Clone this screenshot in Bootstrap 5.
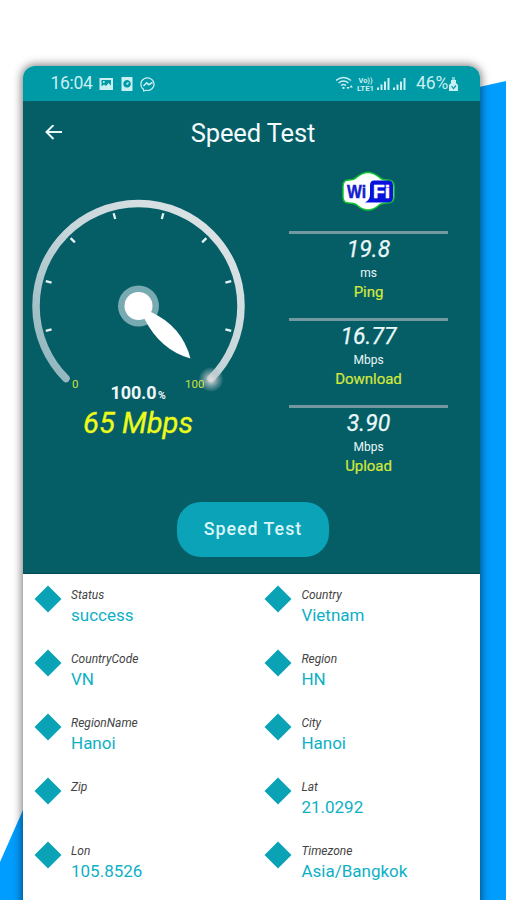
<!DOCTYPE html>
<html lang="en">
<head>
<meta charset="utf-8">
<meta name="viewport" content="width=device-width, initial-scale=1">
<title>Speed Test</title>
<link href="https://cdn.jsdelivr.net/npm/bootstrap@5.3.0/dist/css/bootstrap.min.css" rel="stylesheet">
<style>
body{font-family:Roboto,"Liberation Sans",sans-serif;background:#fff;width:506px;height:900px;line-height:1}
.stage{height:900px;padding:66px 26px 0 23px;isolation:isolate}
.backdrop{inset:0;z-index:-1}
.phone{height:860px;border-radius:12px 12px 0 0;box-shadow:0 0 10px 1px rgba(0,0,0,.55)}
.status{height:35px;background:#0099a6;color:#c8eff1;padding:0 21px 0 27.5px;font-size:17.5px}
.status-time{letter-spacing:-.3px;width:48px}
.status-power{letter-spacing:-.2px}
.panel{height:473px;background:#055e66;border-bottom:1px solid #004b53}
.title-bar{height:64px;color:#f3fbfc}
.title-bar .back{width:62px;padding-left:22px}
.title-bar h1{font-size:25.5px;font-weight:400;width:336px;letter-spacing:-.1px}
.gauge-box{width:232px}
.gauge-box svg{display:block}
.stats{width:159px;margin-left:34px;color:#e9f7f8}
.logo-box{height:66px}
.stat{height:87px;border-top:3px solid #7398a0}
.stat-value{font-size:23px;font-style:italic;line-height:28px;margin-top:2px;-webkit-text-stroke:.25px}
.stat-unit{font-size:12px;line-height:18px}
.stat-name{font-size:15px;line-height:20px;color:#d5e83c;letter-spacing:-.05px;-webkit-text-stroke:.2px}
.go{width:152px;height:55px;background:#0aa3b8!important;color:#daf6f8!important;border:0;border-radius:24px;font-size:17.8px;letter-spacing:1px;font-weight:500;margin:2px 0 0 3px}
.details{padding:9px 0 0 11px;background:#fff}
.info{height:64px;width:215px}
.info:nth-child(odd){width:230.4px}
.diamond{width:28px;height:28px;margin-top:2px;fill:#0aa3b5}
.info dl{padding-left:9px;margin:0}
.info dt{font-size:12px;font-weight:400;font-style:italic;color:#444;line-height:15px;margin-top:5px}
.info dd{font-size:17px;color:#0eb0c5;line-height:20px;margin:2px 0 0}
</style>
</head>
<body>
<div class="stage position-relative overflow-hidden">
  <svg class="backdrop position-absolute" width="506" height="900"><path d="M470 89L506 81V900H470ZM0 862L30 794V900H0Z" fill="#009dff"/></svg>
  <main class="phone bg-white overflow-hidden">
    <div class="status d-flex align-items-center justify-content-between">
      <div class="d-flex align-items-center">
        <span class="status-time">16:04</span>
        <svg width="60" height="18" viewBox="0 0 60 18">
          <path fill="#c8eff1" fill-rule="evenodd" d="M.5 3h13.500v12H.5zM2.500 5v6.500l2.500-2 2 1.500 2.500-3 2.500 2.500V5z"/><circle cx="4.800" cy="7" r="1" fill="#c8eff1"/>
          <path fill="#c8eff1" fill-rule="evenodd" d="M22.500 2h11v14h-11zM28 5a3.800 3.800 0 1 0 .1 0z"/><path d="M27.500 9.500l2-2" stroke="#c8eff1" stroke-width="1.500"/>
          <g fill="none" stroke="#c8eff1" stroke-width="1.200"><path d="M44.500 14.200a6.600 6.300 0 1 1 2.500 1.100l-2.300.7z"/><path d="M44.500 11l3.200-3.200 2 2 3.800-2.300" stroke-width="1.600"/></g>
        </svg>
      </div>
      <div class="d-flex align-items-center">
        <svg width="72" height="20" viewBox="0 0 72 20">
          <g fill="none" stroke="#c8eff1" stroke-width="1.400"><path d="M0 6.500q7.500-6 15 0M2.500 9q5-4 10 0M5 11.500q2.500-2 5 0"/></g>
          <path fill="#c8eff1" d="M6.500 13h2v2h-2zM10.500 13h3L12 15.500zM13.500 13.500L15.200 11l1.700 2.500z"/>
          <text x="22.500" y="9" font-size="8" font-weight="700" textLength="14" lengthAdjust="spacingAndGlyphs" fill="#c8eff1">Vo))</text>
          <text x="21" y="16.500" font-size="8" font-weight="700" textLength="17" lengthAdjust="spacingAndGlyphs" fill="#c8eff1">LTE1</text>
          <path fill="#c8eff1" d="M41 13.500h2V16h-2zM44.500 10.500h2V16h-2zM48 7.500h2V16h-2zM51.500 4h2v12h-2zM57 13.500h2V16h-2zM60.500 10.500h2V16h-2zM64 7.500h2V16h-2zM67.500 4h2v12h-2z"/>
        </svg>
        <span class="status-power ps-2">46%</span>
        <svg width="11" height="18" viewBox="0 0 11 18"><path d="M4 2h3v3H4z" fill="#c8eff1" opacity=".6"/><path d="M3 5h5v3l2 2v6H1v-6l2-2z" fill="#c8eff1"/><path d="M3.500 11l2 2.500 2.500-3" fill="none" stroke="#0099a6" stroke-width="1.200"/></svg>
      </div>
    </div>
    <section class="panel">
      <header class="title-bar d-flex align-items-center">
        <span class="back"><svg width="17" height="16" viewBox="0 0 17 16" fill="none" stroke="#e9f7f8" stroke-width="2"><path d="M17 7H2M8.500 0L1.500 7l7 7"/></svg></span>
        <h1 class="mb-0 text-center">Speed Test</h1>
      </header>
      <div class="d-flex">
        <div class="gauge-box">
          <svg width="232" height="280" viewBox="23 165 232 280">
            <defs>
              <linearGradient id="arc" x1="0" y1="1" x2="1" y2="0"><stop offset="0" stop-color="#8db3bc"/><stop offset=".5" stop-color="#c6d6da"/><stop offset="1" stop-color="#e3e6e8"/></linearGradient>
              <radialGradient id="glow"><stop offset="0" stop-color="#e0dddd"/><stop offset=".35" stop-color="#ccd0d2" stop-opacity=".75"/><stop offset="1" stop-color="#9bb6ba" stop-opacity=".1"/></radialGradient>
            </defs>
            <path d="M66 378.500A102.500 102.500 0 1 1 211 378.500" fill="none" stroke="url(#arc)" stroke-width="7.500" stroke-linecap="round"/>
            <circle cx="211" cy="379.500" r="12" fill="url(#glow)"/>
            <g stroke="#e7f3f4" stroke-width="2.300">
              <path d="M138.500 210v6" transform="rotate(-105 138.500 306)"/><path d="M138.500 210v6" transform="rotate(-75 138.500 306)"/><path d="M138.500 210v6" transform="rotate(-45 138.500 306)"/><path d="M138.500 210v6" transform="rotate(-15 138.500 306)"/><path d="M138.500 210v6" transform="rotate(15 138.500 306)"/><path d="M138.500 210v6" transform="rotate(45 138.500 306)"/><path d="M138.500 210v6" transform="rotate(75 138.500 306)"/><path d="M138.500 210v6" transform="rotate(105 138.500 306)"/>
            </g>
            <circle cx="138.500" cy="306" r="20.500" fill="#78aab1"/>
            <circle cx="138.500" cy="306" r="14" fill="#fff"/>
            <path d="M144 318Q160 350 190.500 358.500Q182 326 150 311.500Z" fill="#fff"/>
            <g fill="#cfe03c" font-size="11.500"><text x="72" y="387.500">0</text><text x="185" y="387.500">100</text></g>
            <text x="110.500" y="399" font-size="18" font-weight="700" fill="#edf7f8" textLength="46">100.0</text>
            <text x="158" y="399" font-size="10.500" font-weight="700" fill="#edf7f8">%</text>
            <text x="83" y="433" font-size="29" font-style="italic" fill="#ecfa1c" textLength="110" lengthAdjust="spacingAndGlyphs" stroke="#ecfa1c" stroke-width=".3">65 Mbps</text>
          </svg>
        </div>
        <div class="stats text-center">
          <div class="logo-box d-flex justify-content-center">
            <svg width="56" height="48" viewBox="0 -3 56 48">
              <path d="M8 12Q13 12 16 9Q27 0 38 9Q41 12 46 12Q53 12 53 18V29Q53 35 46 35Q40 35 37 38Q27 46 17 38Q14 35 8 35Q2 35 2 29V18Q2 12 8 12Z" fill="#fff" stroke="#12c92c" stroke-width="1.500"/>
              <path d="M33 12.500H47Q52 12.500 52 17.500V29.500Q52 34.500 47 34.500H24Q29 32 29 27V17.500Q29 12.500 33 12.500Z" fill="#0712dc"/>
              <text x="6" y="30" font-family="Liberation Sans,sans-serif" font-size="18" font-weight="700" fill="#1420ce" stroke="#1420ce" stroke-width=".5" textLength="19" lengthAdjust="spacingAndGlyphs">Wi</text>
              <text x="32" y="30" font-family="Liberation Sans,sans-serif" font-size="18" font-weight="700" fill="#fff" stroke="#fff" stroke-width=".5" textLength="17" lengthAdjust="spacingAndGlyphs">Fi</text>
            </svg>
          </div>
          <div class="stat"><div class="stat-value">19.8</div><div class="stat-unit">ms</div><div class="stat-name">Ping</div></div>
          <div class="stat"><div class="stat-value">16.77</div><div class="stat-unit">Mbps</div><div class="stat-name">Download</div></div>
          <div class="stat"><div class="stat-value">3.90</div><div class="stat-unit">Mbps</div><div class="stat-name">Upload</div></div>
        </div>
      </div>
      <div class="d-flex justify-content-center pt-2"><button type="button" class="btn go p-0">Speed Test</button></div>
    </section>
    <section class="details d-flex flex-wrap">
      <div class="info d-flex"><svg class="diamond" viewBox="0 0 28 28"><path d="M14 .5L27.500 14 14 27.500 .5 14z"/></svg><dl><dt>Status</dt><dd>success</dd></dl></div>
      <div class="info d-flex"><svg class="diamond" viewBox="0 0 28 28"><path d="M14 .5L27.500 14 14 27.500 .5 14z"/></svg><dl><dt>Country</dt><dd>Vietnam</dd></dl></div>
      <div class="info d-flex"><svg class="diamond" viewBox="0 0 28 28"><path d="M14 .5L27.500 14 14 27.500 .5 14z"/></svg><dl><dt>CountryCode</dt><dd>VN</dd></dl></div>
      <div class="info d-flex"><svg class="diamond" viewBox="0 0 28 28"><path d="M14 .5L27.500 14 14 27.500 .5 14z"/></svg><dl><dt>Region</dt><dd>HN</dd></dl></div>
      <div class="info d-flex"><svg class="diamond" viewBox="0 0 28 28"><path d="M14 .5L27.500 14 14 27.500 .5 14z"/></svg><dl><dt>RegionName</dt><dd>Hanoi</dd></dl></div>
      <div class="info d-flex"><svg class="diamond" viewBox="0 0 28 28"><path d="M14 .5L27.500 14 14 27.500 .5 14z"/></svg><dl><dt>City</dt><dd>Hanoi</dd></dl></div>
      <div class="info d-flex"><svg class="diamond" viewBox="0 0 28 28"><path d="M14 .5L27.500 14 14 27.500 .5 14z"/></svg><dl><dt>Zip</dt><dd></dd></dl></div>
      <div class="info d-flex"><svg class="diamond" viewBox="0 0 28 28"><path d="M14 .5L27.500 14 14 27.500 .5 14z"/></svg><dl><dt>Lat</dt><dd>21.0292</dd></dl></div>
      <div class="info d-flex"><svg class="diamond" viewBox="0 0 28 28"><path d="M14 .5L27.500 14 14 27.500 .5 14z"/></svg><dl><dt>Lon</dt><dd>105.8526</dd></dl></div>
      <div class="info d-flex"><svg class="diamond" viewBox="0 0 28 28"><path d="M14 .5L27.500 14 14 27.500 .5 14z"/></svg><dl><dt>Timezone</dt><dd>Asia/Bangkok</dd></dl></div>
    </section>
  </main>
</div>
<script src="https://cdn.jsdelivr.net/npm/bootstrap@5.3.0/dist/js/bootstrap.bundle.min.js"></script>
</body>
</html>
